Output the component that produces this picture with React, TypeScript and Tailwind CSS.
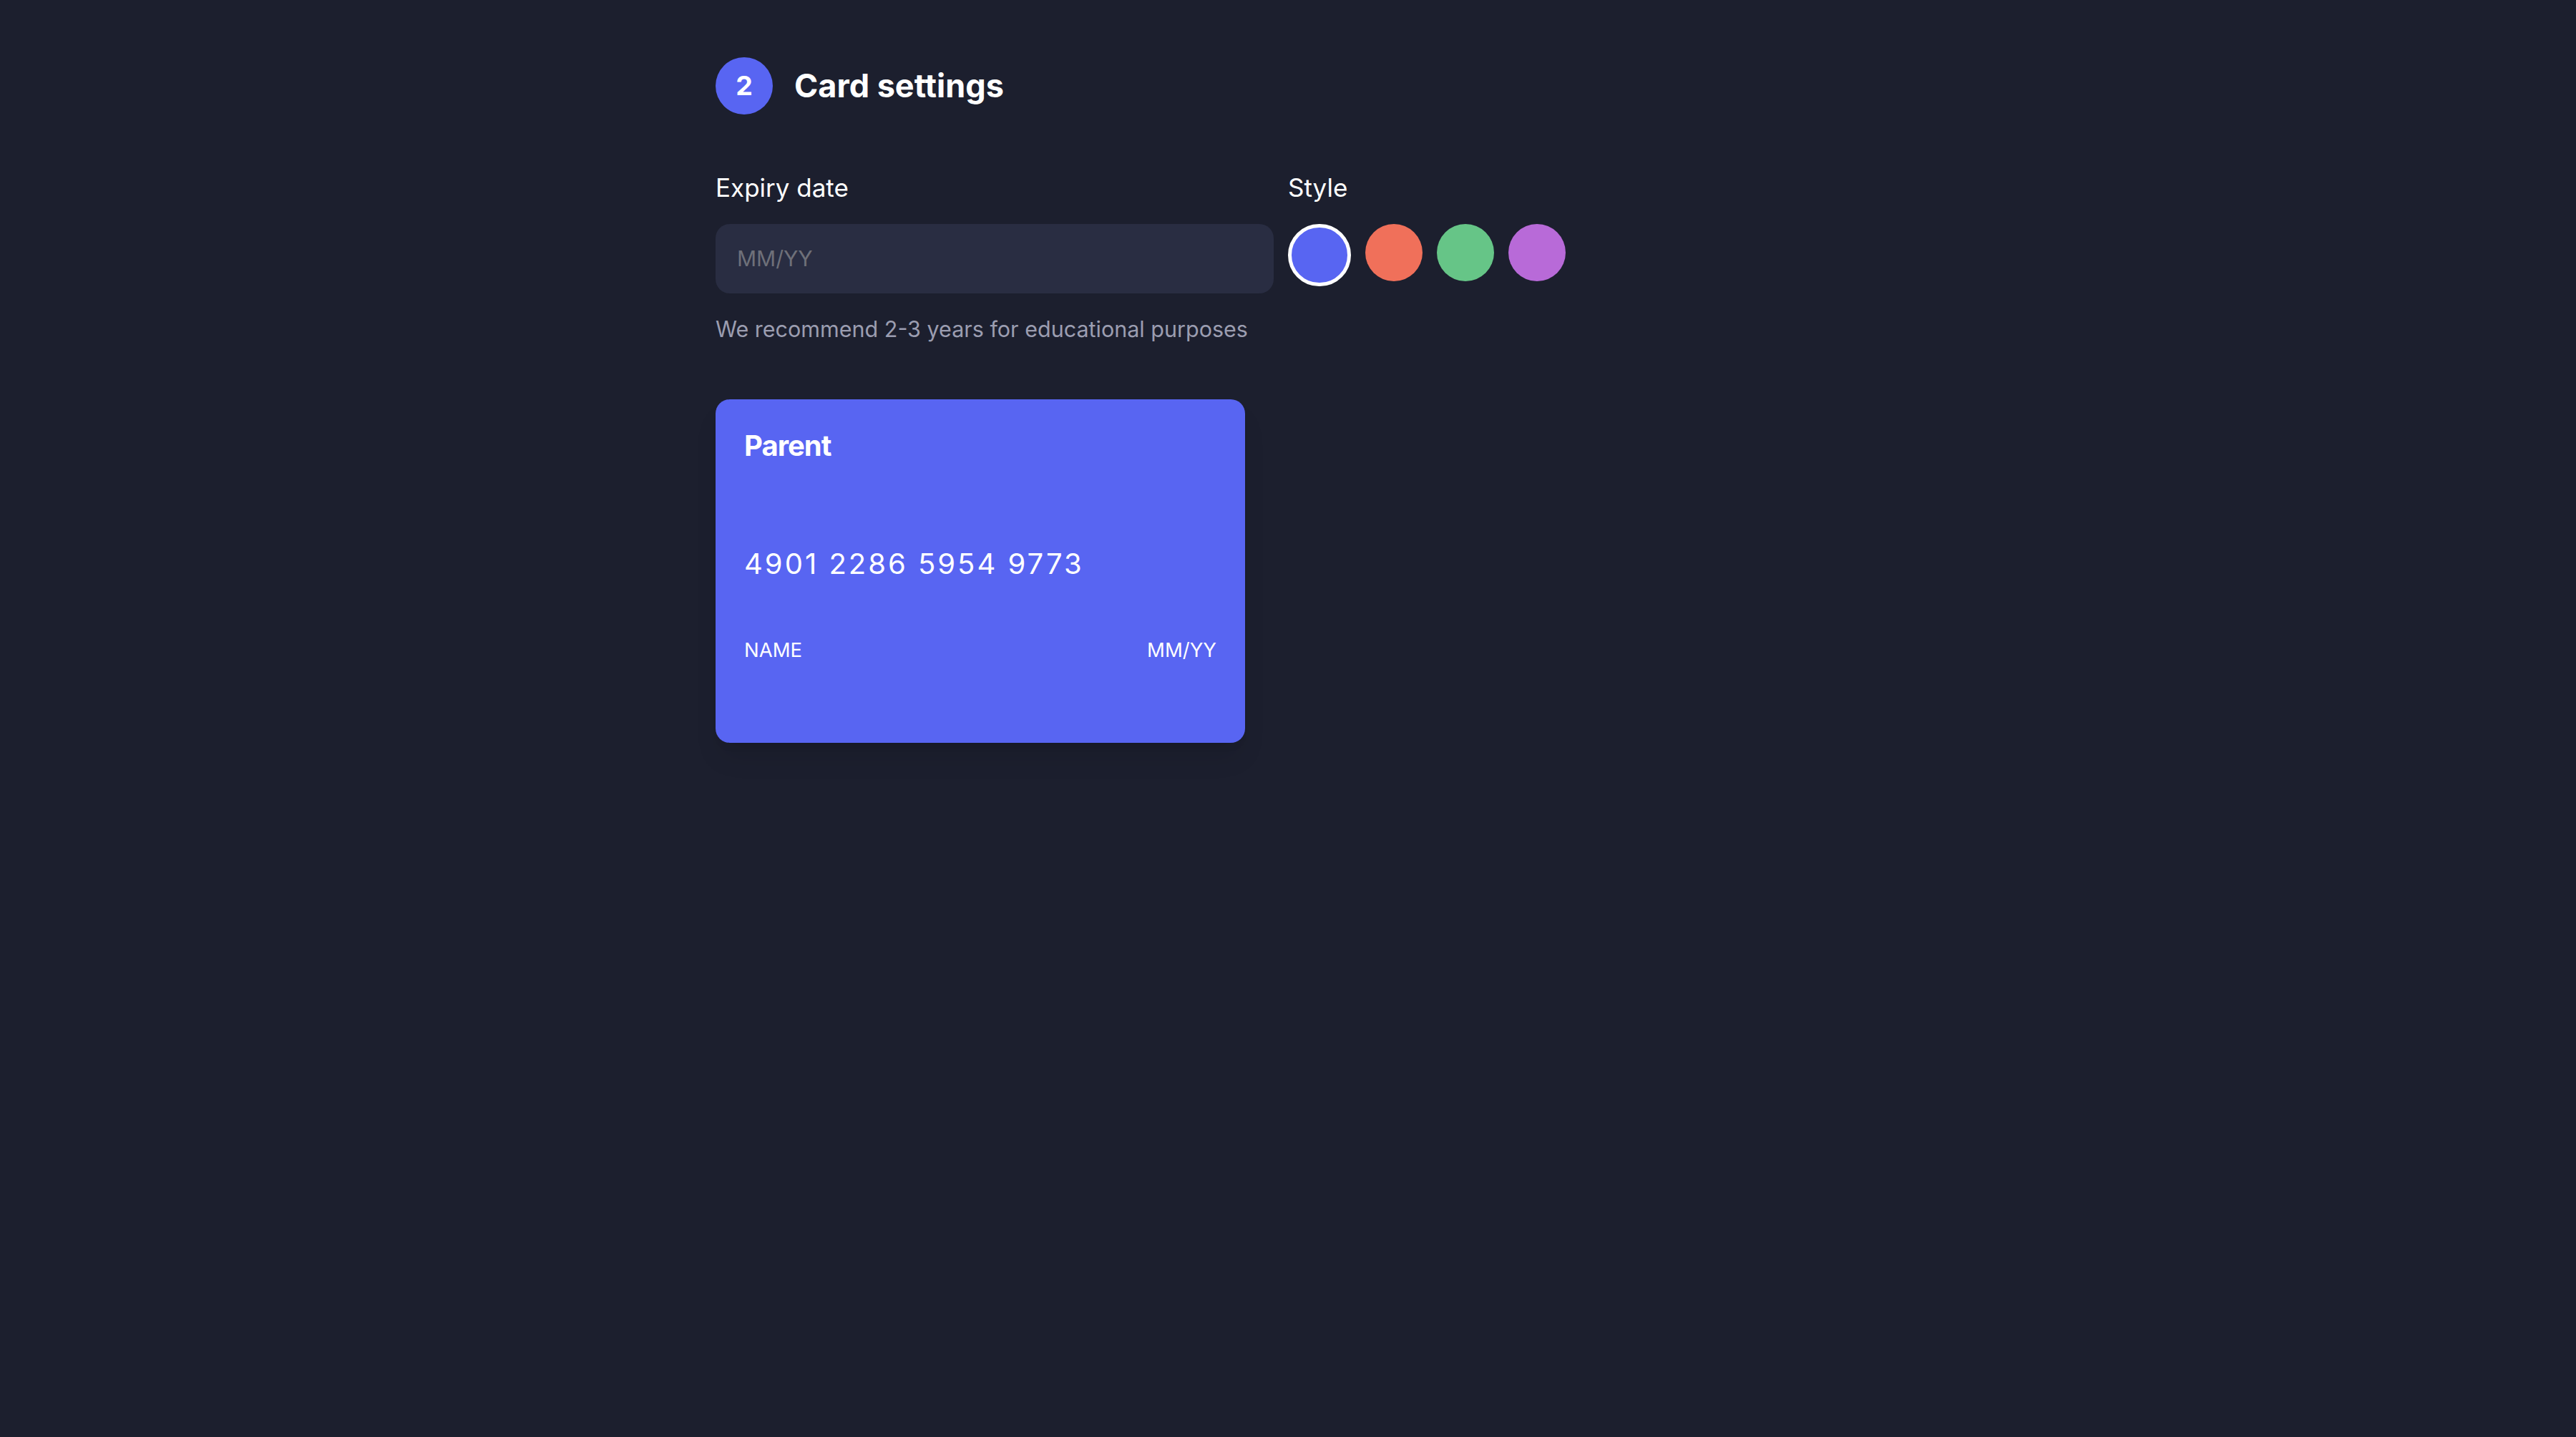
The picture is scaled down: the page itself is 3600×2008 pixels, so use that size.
import { useState } from 'react';

const styles = [
  { id: 'blue', swatch: 'bg-[#5865f2]' },
  { id: 'orange', swatch: 'bg-[#f0705a]' },
  { id: 'green', swatch: 'bg-[#66c587]' },
  { id: 'purple', swatch: 'bg-[#b86ad8]' },
];

export default function App() {
  const [style, setStyle] = useState('blue');
  const [expiry, setExpiry] = useState('');

  return (
    <div className="min-h-screen bg-[#1c1f2e] [font-family:Inter,'Noto_Sans',sans-serif]">
      {/* page is laid out at 1x and zoomed to the screenshot's pixel ratio */}
      <div className="[zoom:2.5]">
        <div className="max-w-2xl mx-auto px-4 pt-8">
          {/* Step header */}
          <div className="flex items-center gap-3 mb-8">
            <div className="w-8 h-8 rounded-full bg-[#5865f2] flex items-center justify-center text-white text-[15px] font-bold">
              2
            </div>
            <h2 className="text-lg font-bold text-white">Card settings</h2>
          </div>

          <div className="flex items-start gap-2">
            <div className="w-[312px]">
              <label className="block text-sm leading-[18px] text-white mb-[11px]">Expiry date</label>
              <input
                value={expiry}
                onChange={(e) => setExpiry(e.target.value)}
                placeholder="MM/YY"
                className="w-full h-[39px] px-3 rounded-lg bg-[#292d42] text-xs text-white placeholder:text-[#6e7079] outline-none"
              />
              <p className="mt-3 text-[12.2px] leading-4 text-[#9b9db0]">
                We recommend 2-3 years for educational purposes
              </p>
            </div>

            <div>
              <div className="text-sm leading-[18px] text-white mb-[11px]">Style</div>
              <div className="flex items-start gap-2">
                {styles.map((s) => (
                  <button
                    key={s.id}
                    onClick={() => setStyle(s.id)}
                    className={`rounded-full ${s.swatch} ${
                      style === s.id ? 'w-[35px] h-[35px] border-2 border-white' : 'w-8 h-8'
                    }`}
                  />
                ))}
              </div>
            </div>
          </div>

          {/* Card preview */}
          <div
            className={`mt-[31px] w-[296px] h-48 rounded-lg p-4 text-white shadow-lg ${
              styles.find((s) => s.id === style)?.swatch
            }`}
          >
            <div className="text-base leading-5 font-bold tracking-tight">Parent</div>
            <div className="mt-11 text-base leading-6 tracking-[0.075em]">4901 2286 5954 9773</div>
            <div className="mt-7 flex justify-between text-[11px] leading-4">
              <span>NAME</span>
              <span>{expiry || 'MM/YY'}</span>
            </div>
          </div>
        </div>
      </div>
    </div>
  );
}
